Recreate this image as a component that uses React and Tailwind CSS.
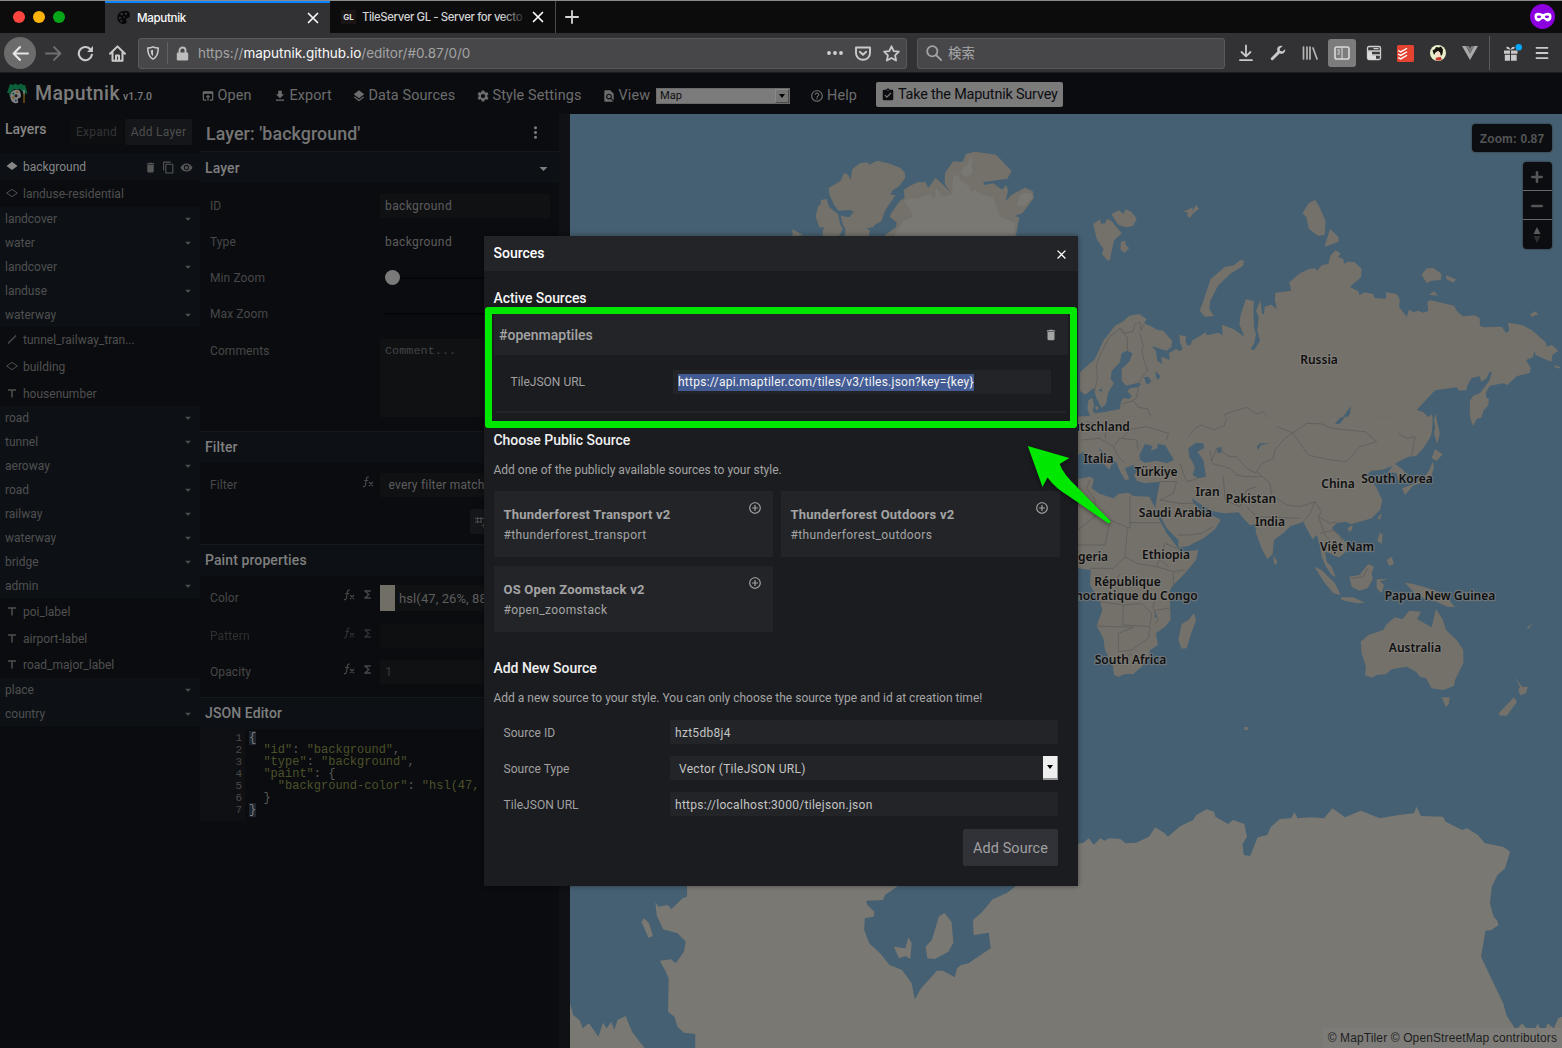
import React from "react";
import {
  MdOpenInBrowser, MdFileDownload, MdLayers, MdSettings, MdFindInPage, MdHelpOutline,
  MdAssignmentTurnedIn, MdDelete, MdContentCopy, MdVisibility, MdArrowDropDown, MdMoreVert,
  MdAddCircleOutline, MdFunctions, MdClose,
} from "react-icons/md";

/* ---------- browser chrome ---------- */

function Cross({ className }) {
  return (
    <svg viewBox="0 0 12 12" className={className} fill="none" stroke="currentColor" strokeWidth="1.7" strokeLinecap="round">
      <path d="M1.5 1.5l9 9M10.5 1.5l-9 9" />
    </svg>
  );
}

function Palette({ className }) {
  return (
    <svg viewBox="0 0 16 16" className={className}>
      <path fill="#08080a" d="M12 1C6 0 1 3 1.500 9c.3 4 4 6.500 8 5.700 2-.5 2.500-2 1.500-3.200-1-1.500 0-2.500 1.500-3 2-.5 2.800-2 2.300-4C14.400 2.500 13.500 1.300 12 1z" />
      <g fill="#38383b">
        <circle cx="6" cy="4.500" r="1.200" /><circle cx="10.500" cy="4" r="1.200" /><circle cx="4.200" cy="8.300" r="1.200" />
        <circle cx="5.600" cy="11.700" r="1.100" /><circle cx="8.500" cy="7.500" r=".9" />
      </g>
    </svg>
  );
}

function TabBar() {
  return (
    <div className="flex h-[33px] border-t border-[#8a8a8a] bg-[#0c0c0c]">
      <div className="flex w-[105px] items-center gap-[8px] pl-[13px]">
        <span className="size-[12px] rounded-full bg-[#ff453f]" />
        <span className="size-[12px] rounded-full bg-[#fcb40a]" />
        <span className="size-[12px] rounded-full bg-[#07a618]" />
      </div>
      <div className="flex w-[225px] items-center border-t-2 border-[#0a84ff] bg-[#323234] pb-[1px] pl-[11px] pr-[11px] text-[11.600px] font-medium tracking-[-0.33px] text-[#f9f9fa]">
        <Palette className="size-[15px]" />
        <span className="ml-[6px] flex-1 pt-[2px]">Maputnik</span>
        <Cross className="size-[12px]" />
      </div>
      <div className="flex w-[225px] items-center pl-[11px] pr-[11px] text-[11.600px] font-medium text-[#d2d2d3]">
        <span className="flex h-[14px] w-[15px] items-center justify-center bg-[#1b1515] text-[8px] font-bold text-[#dddddd]">GL</span>
        <span className="relative ml-[6px] w-[165px] whitespace-nowrap pt-px text-[11.400px] tracking-[-0.400px]">
          TileServer GL - Server for vecto
          <span className="absolute inset-y-0 right-0 w-[26px] bg-gradient-to-r from-transparent to-[#0c0c0c]" />
        </span>
        <Cross className="ml-auto size-[12px] shrink-0 text-white" />
      </div>
      <div className="my-0 w-px bg-[#4a4a4a]" />
      <svg viewBox="0 0 14 14" className="ml-[9px] mt-[9px] size-[14px]" stroke="#d5d5d5" strokeWidth="1.800" strokeLinecap="round"><path d="M7 .9v12.200M.9 7h12.200" /></svg>
      <div className="ml-auto mr-[7px] mt-[3px] flex size-[25px] items-center justify-center rounded-full bg-[#8c00e0]">
        <svg viewBox="0 0 18 10" className="h-[10px] w-[18px]">
          <path fill="#fff" d="M4.300.8C6.500.8 7.500 2 9 2s2.500-1.200 4.700-1.200C16.500.8 17.500 2 17.500 4.500c0 3-1.300 4.900-3.800 4.900C11.300 9.400 10.500 6.800 9 6.800S6.700 9.400 4.300 9.400C1.800 9.400.5 7.500.5 4.500.5 2 1.500.8 4.300.8z" />
          <ellipse cx="5" cy="4.800" rx="2.100" ry="1.400" fill="#8c00e0" /><ellipse cx="13" cy="4.800" rx="2.100" ry="1.400" fill="#8c00e0" />
        </svg>
      </div>
    </div>
  );
}

function NavBar() {
  return (
    <div className="flex h-[40px] items-center border-b border-[#1c1c1e] bg-[#323234] pt-[1px] text-[#c9c9ca]">
      <div className="ml-[4px] flex size-[32px] items-center justify-center rounded-full bg-[#6b6b6c]">
        <svg viewBox="0 0 16 16" className="size-[17px]" fill="none" stroke="#e4e4e4" strokeWidth="2" strokeLinecap="round" strokeLinejoin="round"><path d="M15 8H1.500M7.500 2l-6 6 6 6" /></svg>
      </div>
      <svg viewBox="0 0 16 16" className="ml-[9px] size-[17px]" fill="none" stroke="#6f6f71" strokeWidth="1.900" strokeLinecap="round" strokeLinejoin="round"><path d="M1 8h13.500M8.500 2l6 6-6 6" /></svg>
      <svg viewBox="0 0 16 16" className="ml-[15px] size-[17px]" fill="none" stroke="currentColor" strokeWidth="2" strokeLinecap="round"><path d="M14 9.200A6.200 6.200 0 1 1 12.300 3.700" /><path d="M15 1v5.500H9.500z" fill="currentColor" stroke="none" /></svg>
      <svg viewBox="0 0 16 16" className="ml-[15px] size-[17px]" fill="none" stroke="currentColor" strokeWidth="1.900" strokeLinecap="round" strokeLinejoin="round"><path d="M1 8.200L8 1.300l7 6.900M3.300 7v7.800h9.400V7" /><path d="M6.600 14.500V9.800h2.800v4.700" /></svg>

      <div className="ml-[12px] flex h-[31px] w-[769px] items-center rounded-[3px] border border-[#5a5a5c] bg-[#474749]">
        <svg viewBox="0 0 16 16" className="ml-[7px] size-[14px]" fill="none" stroke="#c9c9ca" strokeWidth="1.800" strokeLinejoin="round"><path d="M8 1c2 1 4 1.300 6 1.300 0 6-1 10.200-6 12.700C3 12.500 2 8.300 2 2.300 4 2.300 6 2 8 1z" /><path d="M8 4.200v7.300c-1.700-1.200-2.500-3.400-2.600-6.500z" fill="#c9c9ca" stroke="none" /></svg>
        <span className="ml-[7px] h-[22px] w-px bg-[#5e6168]" />
        <svg viewBox="0 0 12 15" className="ml-[8px] h-[15px] w-[13px]"><path d="M3 7V4.500a3 3 0 0 1 6 0V7" fill="none" stroke="#bdbdbd" strokeWidth="1.900" /><rect x=".3" y="6.500" width="11.400" height="8" rx="1.300" fill="#bdbdbd" /></svg>
        <span className="ml-[9px] flex-1 pt-px text-[13.500px] tracking-[-0.01px] text-[#a3a3a4]">https://<span className="text-[#f9f9fa]">maputnik.github.io</span>/editor/#0.87/0/0</span>
        <svg viewBox="0 0 16 4" className="h-[4px] w-[16px]" fill="#d0d0d0"><circle cx="2" cy="2" r="1.900" /><circle cx="8" cy="2" r="1.900" /><circle cx="14" cy="2" r="1.900" /></svg>
        <svg viewBox="0 0 16 15" className="ml-[12px] h-[15px] w-[16px]" fill="none" stroke="#c9c9ca" strokeWidth="1.900" strokeLinecap="round" strokeLinejoin="round"><path d="M1 1.500h14V7c0 4-3 6.800-7 6.800S1 11 1 7z" /><path d="M4.800 5.800L8 8.800l3.200-3" /></svg>
        <svg viewBox="0 0 16 16" className="ml-[12px] mr-[6px] size-[17px]" fill="none" stroke="#c9c9ca" strokeWidth="1.700" strokeLinejoin="round"><path d="M8 1.200l2.100 4.500 4.800.6-3.500 3.400.9 4.900L8 12.200l-4.300 2.400.9-4.900L1.100 6.300l4.800-.6z" /></svg>
      </div>

      <div className="ml-[10px] flex h-[31px] w-[308px] items-center rounded-[3px] border border-[#5a5a5c] bg-[#474749]">
        <svg viewBox="0 0 16 16" className="ml-[8px] size-[16px]" fill="none" stroke="#a3a3a4" strokeWidth="1.800" strokeLinecap="round"><circle cx="6.300" cy="6.300" r="5.100" /><path d="M10 10l5.200 5.200" /></svg>
        <span className="ml-[6px] text-[13.400px] text-[#a8a8a9]">検索</span>
      </div>

      <svg viewBox="0 0 16 18" className="ml-[13px] h-[18px] w-[16px]" fill="none" stroke="currentColor" strokeWidth="1.800" strokeLinecap="round" strokeLinejoin="round"><path d="M8 1.500v10.500M3.500 8L8 12.300 12.500 8M2 16.200h12" /></svg>
      <svg viewBox="0 0 16 16" className="ml-[16px] size-[16px]"><path fill="#c9c9ca" d="M15.200 4.200l-3 2.300-2.300-.8-.2-2.300 2.900-2.200C10.500.2 7.900 1.300 7.300 3.500c-.3 1.100-.1 1.900.2 2.700L1 12.900c-.9 1.200.8 2.900 2 2l6.600-6.400c2.800 1.200 5.900-.9 5.600-4.300z" /></svg>
      <svg viewBox="0 0 16 16" className="ml-[16px] size-[16px]" stroke="#b5b5b6" strokeWidth="1.700" strokeLinecap="round"><path d="M1.500 2v12M5 2v12M8 2v12M11 3l4 11" /></svg>
      <div className="ml-[10px] flex size-[28px] items-center justify-center rounded-[3px] bg-[#7c7c7d]">
        <svg viewBox="0 0 16 14" className="h-[14px] w-[16px]" fill="none" stroke="#d9d9d9" strokeWidth="1.600"><rect x="1" y="1" width="14" height="12" rx="1.800" /><path d="M8 1v12M3.300 4h2.700M3.800 6h2.200M3.300 8h2.400" strokeWidth="1" /></svg>
      </div>
      <svg viewBox="0 0 16 16" className="ml-[10px] size-[16px]"><rect x="1.500" y="1.500" width="13" height="13" rx="1.500" fill="#3b3b3d" stroke="#cfcfcf" strokeWidth="1.300" /><path d="M2 6h12M6 10h8M7.500 3.700h5" stroke="#cfcfcf" strokeWidth="1.300" /><path d="M2 6.500h4v8H2zM6 10.500h4v4H6z" fill="#dcdcdc" /></svg>
      <svg viewBox="0 0 16 16" className="ml-[15px] size-[17px]"><rect width="16" height="16" rx="1.500" fill="#e44332" /><path d="M1 5.200l2.500 1.300L9.500 3M1 8.500l2.500 1.300 6-3.500M1 11.800l2.500 1.300 6-3.500" fill="none" stroke="#fff" strokeWidth="1.200" /></svg>
      <svg viewBox="0 0 16 16" className="ml-[16px] size-[16px]"><circle cx="8" cy="8" r="8" fill="#e9edc9" /><path d="M2.500 5.500L5 4l1-2 3 .5L11 1.500l2 3-.5 4.500-1.500 2-1-3L8 6 5.500 7.500 4 10z" fill="#17130f" /><path d="M5.500 8l3-2 1.800 2-.6 3-1.700 1.200-2-1.200z" fill="#f5dccb" /><path d="M6 12.800l4.500-1 1.500 2.500c-1.700 1.400-4.200 1.700-6.500.8z" fill="#c33a2f" /></svg>
      <svg viewBox="0 0 16 14" className="ml-[16px] h-[14px] w-[16px]"><path d="M0 0h4l4 7.500L12 0h4L8 14z" fill="#a9a9aa" /><path d="M4 0h2.800L8 2.200 9.200 0H12L8 7.500z" fill="#77777a" /></svg>
      <span className="ml-[11px] h-[34px] w-px bg-[#5a5a5c]" />
      <svg viewBox="0 0 20 18" className="ml-[13px] h-[18px] w-[20px]"><path fill="#c9c9ca" d="M1 6.500h6v3.300H1zM8 6.500h6.500v3.300H8zM1.800 10.800H7v6H1.800zM8 10.800h5.700v6H8zM3.500 3c1.500-1 3 .5 4 2.500C8.500 3.500 10 2 11.500 3c.8 1-.5 2.500-4 2.700C4 5.500 2.700 4 3.500 3z" /><circle cx="15.800" cy="3.200" r="3.200" fill="#00a8ff" /></svg>
      <svg viewBox="0 0 14 14" className="ml-[12px] h-[14px] w-[14px]" stroke="#c9c9ca" strokeWidth="1.800" strokeLinecap="round"><path d="M1.500 1.800h11M1.500 7h11M1.500 12.200h11" /></svg>
    </div>
  );
}

/* ---------- Maputnik header ---------- */

function Logo() {
  return (
    <svg viewBox="0 0 22 22" className="size-[22px]">
      <path fill="#0b6039" d="M1 10L3 4l1-3 3 1 2.500-1.500L12 2l3-1.500L17 2l2 0 1 3 1.500 6-2.500-1v4l-2-5-3-3H8L5 9l-1.500 5-.5-4z" />
      <path fill="#808080" d="M11 6.500C7 6.500 4 9.500 4.200 13.500c.2 4 2.700 6.800 6 6.800 2 0 2.500-1 1.800-2.500-.8-1.800.3-2.400 1.600-2.800 1.600-.6 1.600-3 .9-5C14 8 13 6.500 11 6.500z" />
      <circle cx="7.400" cy="10.700" r="1.100" fill="#0b6039" /><circle cx="11.200" cy="9" r="1" fill="#7f5a12" /><circle cx="7.200" cy="14.800" r="1.200" fill="#7f5a12" /><circle cx="10" cy="12.700" r="1.500" fill="#15161a" /><circle cx="9.800" cy="17.500" r="1" fill="#17405e" />
      <path d="M18 7v4" stroke="#8a8a8a" strokeWidth="1.300" /><path d="M18 11v9" stroke="#7f5a12" strokeWidth="1.300" />
    </svg>
  );
}

function HeaderItem({ icon: Icon, label, className }) {
  return (
    <div className={"flex items-center gap-[3px] tracking-[0.12px] " + className}>
      <Icon className="mt-[2px] size-[14px] shrink-0" />
      <span>{label}</span>
    </div>
  );
}

function AppHeader() {
  return (
    <div className="flex h-[41px] items-center whitespace-nowrap bg-[#0b0c0f] pl-[6px] text-[14.400px] text-[#6d6d6e]">
      <Logo />
      <div className="ml-[7px] flex w-[165.500px] items-baseline font-bold">
        <span className="text-[19.500px] font-medium tracking-[0.400px] text-[#7c7c7c]">Maputnik</span>
        <span className="ml-[3px] text-[10.500px] font-medium text-[#7c7c7c]">v1.7.0</span>
      </div>
      <HeaderItem icon={MdOpenInBrowser} label="Open" className="mt-[4px] w-[72px]" />
      <HeaderItem icon={MdFileDownload} label="Export" className="mt-[4px] w-[79px]" />
      <HeaderItem icon={MdLayers} label="Data Sources" className="mt-[4px] w-[124px]" />
      <HeaderItem icon={MdSettings} label="Style Settings" className="mt-[4px] w-[126px]" />
      <HeaderItem icon={MdFindInPage} label="View" className="mt-[4px] w-[54.500px]" />
      <div className="mt-[4px] flex h-[16px] w-[134px] items-center justify-between border border-[#6a6a6a] bg-[#7b7b7b] pl-[3px] text-[11.200px] text-[#101010]">
        <span className="pt-px">Map</span>
        <span className="flex h-full w-[14px] items-center justify-center border border-b-[#4a4a4a] border-l-[#8a8a8a] border-r-[#4a4a4a] border-t-[#8a8a8a] bg-[#757575]">
          <span className="size-0 border-x-[3px] border-t-[4px] border-x-transparent border-t-black" />
        </span>
      </div>
      <HeaderItem icon={MdHelpOutline} label="Help" className="ml-[20px] mt-[4px] w-[66px]" />
      <div className="mt-[2px] flex h-[25px] w-[187px] items-center gap-[3px] rounded-[2px] bg-[#7b7b7b] pl-[5px] pt-px tracking-[-0.18px] text-[#0c0d10]">
        <MdAssignmentTurnedIn className="size-[14px] shrink-0" />
        Take the Maputnik Survey
      </div>
    </div>
  );
}

/* ---------- layer list ---------- */

const LAYERS = [
  ["fill-solid", "background"], ["fill", "landuse-residential"],
  ["group", "landcover"], ["group", "water"], ["group", "landcover"], ["group", "landuse"], ["group", "waterway"],
  ["line", "tunnel_railway_tran..."], ["fill", "building"], ["text", "housenumber"],
  ["group", "road"], ["group", "tunnel"], ["group", "aeroway"], ["group", "road"], ["group", "railway"], ["group", "waterway"], ["group", "bridge"], ["group", "admin"],
  ["text", "poi_label"], ["text", "airport-label"], ["text", "road_major_label"],
  ["group", "place"], ["group", "country"],
];

function LayerGlyph({ kind }) {
  return (
    <svg viewBox="0 0 12 12" className="mr-[5px] size-[12px] shrink-0" fill="none" stroke="currentColor">
      {kind === "fill" && <path d="M.7 5L6 1.300 11.300 5 6 8.700z" />}
      {kind === "fill-solid" && <path d="M.5 4.900L6 .8l5.500 4.100L6 9z" fill="#868686" stroke="none" />}
      {kind === "line" && <path d="M2 9.500l8-8" strokeWidth="1.200" />}
      {kind === "text" && <path d="M2 2h8M6 2v7.500" strokeWidth="1.500" />}
    </svg>
  );
}

function LayerList() {
  return (
    <div className="h-full w-[200px] bg-[#0b0c0f] text-[12px] text-[#4f5050]">
      <div className="flex h-[39.400px] pl-[5px]">
        <span className="mt-[5px] w-[65px] text-[14px] font-medium text-[#868686]">Layers</span>
        <div className="mt-[5px] flex h-[26px] w-[53px] items-center justify-center rounded-[2px] bg-[#0d0e10] text-[12px] tracking-[0.250px] text-[#333435]">Expand</div>
        <div className="ml-[2px] mt-[5px] flex h-[26px] w-[67px] items-center justify-center rounded-[2px] bg-[#151619] text-[12px] tracking-[0.250px] text-[#4d4e4e]">Add Layer</div>
      </div>
      {LAYERS.map(([kind, name], i) =>
        kind === "group" ? (
          <div key={i} className="flex h-[24px] items-center justify-between bg-[#0d1015] pl-[5px] pr-[5px]">
            {name}
            <MdArrowDropDown className="size-[14px]" />
          </div>
        ) : (
          <div key={i} className={"flex h-[26.600px] items-center pl-[6px] pt-px " + (kind === "fill-solid" ? "bg-[#0d1015] text-[#868686]" : "")}>
            <LayerGlyph kind={kind} />
            <span className="flex-1">{name}</span>
            {kind === "fill-solid" && (
              <span className="mr-[7px] flex items-center gap-[5px] text-[#555656]">
                <MdDelete className="size-[13px]" /><MdContentCopy className="size-[13px]" /><MdVisibility className="size-[13px]" />
              </span>
            )}
          </div>
        )
      )}
    </div>
  );
}

/* ---------- property drawer ---------- */

function Section({ title, arrow, className, children }) {
  return (
    <div className={"border-t border-[#17181b] " + className}>
      <div className={"flex h-[31px] items-center justify-between bg-[#0d1015] pl-[5px] pr-[6px] text-[14px] font-medium text-[#7f7f7f] " + (arrow ? "pt-px" : "")}>
        {title}
        {arrow && <MdArrowDropDown className="size-[19px]" />}
      </div>
      {children}
    </div>
  );
}

function Fn() {
  return (
    <svg viewBox="0 0 12 12" className="size-[12px]" fill="none" stroke="currentColor" strokeWidth="1.200">
      <path d="M6.800 1.200C5.300.6 4.700 1.500 4.500 2.800L3.400 9c-.3 1.500-1.200 2-2.500 1.500M2.200 4.500h4M7 6l4 4M11 6l-4 4" />
    </svg>
  );
}

function Row({ label, className, tools, children }) {
  return (
    <div className={"flex pl-[10px] " + className}>
      <span className="w-[100px]">{label}</span>
      <span className="mr-[6px] flex flex-1 items-center justify-end gap-[6px] pb-[6px]">
        {tools && <Fn />}
        {tools === "two" && <MdFunctions className="size-[13px]" />}
      </span>
      <div className="flex w-[179px] justify-start">{children}</div>
    </div>
  );
}

const JSON_LINES = [
  [["b", "{"]],
  [["p", "  "], ["s", '"id"'], ["p", ": "], ["s", '"background"'], ["p", ","]],
  [["p", "  "], ["s", '"type"'], ["p", ": "], ["s", '"background"'], ["p", ","]],
  [["p", "  "], ["s", '"paint"'], ["p", ": {"]],
  [["p", "    "], ["s", '"background-color"'], ["p", ": "], ["s", '"hsl(47,']],
  [["p", "  }"]],
  [["b", "}"]],
];
const TOKEN = { b: "bg-[#1f252e] text-[#7a7a7a]", p: "text-[#5a5a5a]", s: "text-[#4b522b]" };

function Drawer() {
  const field = "h-[24px] w-[170px] flex items-center bg-[#101113] pl-[5px] text-[12px] tracking-[0.400px] text-[#5d5d5e]";
  return (
    <div className="flex h-full w-[370px] bg-[#0b0c0f] text-[12px] tracking-[0.1px] text-[#474849]">
      <div className="w-[359px]">
        <div className="flex h-[37px] items-center justify-between pl-[6px] pr-[14px] text-[17.800px] font-medium text-[#757576]">
          <span className="mt-[3px]">Layer: 'background'</span>
          <MdMoreVert className="size-[19px] text-[#7a7a7a]" />
        </div>
        <Section title="Layer" arrow className="h-[280px]">
          <div className="pt-[4.500px]">
            <Row label="ID" className="h-[36.200px] items-center"><div className={field}>background</div></Row>
            <Row label="Type" className="h-[36.200px] items-center"><div className="pl-[5px] tracking-[0.400px] text-[#5d5d5e]">background</div></Row>
            <Row label="Min Zoom" className="h-[36.200px] items-center">
              <div className="flex w-full items-center pl-[5px]"><span className="size-[15px] rounded-full bg-[#7a7a7a]" /><span className="h-[2px] flex-1 bg-[#050607]" /></div>
            </Row>
            <Row label="Max Zoom" className="h-[36.200px] items-center"><div className="ml-[3px] h-[2px] w-full bg-[#050607]" /></Row>
            <Row label="Comments" className="h-[80px] pt-[10px]">
              <div className="-mt-[3px] h-[78px] w-[170px] bg-[#101113] pl-[5px] pt-[4px] font-['Courier_New','Liberation_Mono',monospace] text-[11.700px] text-[#444546]">Comment...</div>
            </Row>
          </div>
        </Section>
        <Section title="Filter" className="h-[113px]">
          <Row label="Filter" className="h-[42px] items-center pt-px" tools="one"><div className="flex h-[24px] w-[170px] items-center bg-[#101113] pl-[8.500px] tracking-[0.2px] text-[#5d5d5e]">every filter matches</div></Row>
          <div className="ml-[270px] mt-[4px] flex h-[25px] w-[60px] items-center rounded-[2px] bg-[#151619] pl-[5px] text-[#4a4a4a]">
            <svg viewBox="0 0 12 12" className="size-[12px]" stroke="currentColor" strokeWidth="1.200"><path d="M0 2.500h12M0 6h7M2.500 1v6M6 1v6M9.500 1v4M9 7v5M6.500 9.500h5" /></svg>
          </div>
        </Section>
        <Section title="Paint properties" className="h-[153px]">
          <Row label="Color" className="h-[43.500px] items-center" tools="two">
            <div className="flex h-[26px] w-[170px] items-center bg-[#101113] text-[13px] text-[#5d5d5e]"><span className="h-full w-[15px] bg-[#716e66]" /><span className="ml-[4px] whitespace-nowrap pt-px">hsl(47, 26%, 88%)</span></div>
          </Row>
          <Row label="Pattern" className="-mt-[1.500px] h-[36px] items-center opacity-60" tools="two"><div className={field} /></Row>
          <Row label="Opacity" className="h-[36px] items-center" tools="two"><div className={field}><span className="text-[13px] text-[#373839]">1</span></div></Row>
        </Section>
        <Section title="JSON Editor" className="">
          <div className="flex h-[92px] font-['Courier_New','Liberation_Mono',monospace] text-[12px] leading-[12px] tracking-normal">
            <div className="w-[45px] bg-[#0f1013] pr-[3px] pt-[3px] text-right font-['Liberation_Mono'] text-[11px] leading-[12px] text-[#4a4a4a]">
              {JSON_LINES.map((_, i) => <div key={i}>{i + 1}</div>)}
            </div>
            <div className="pl-[4px] pt-[3px]">
              {JSON_LINES.map((line, i) => (
                <div key={i} className="h-[12px] whitespace-pre">
                  {line.map(([k, t], j) => <span key={j} className={TOKEN[k]}>{t}</span>)}
                </div>
              ))}
            </div>
          </div>
        </Section>
      </div>
      <div className="w-[11px] bg-[#101114]" />
    </div>
  );
}

/* ---------- map ---------- */

const LABELS = [
  ["Russia", 1319, 359], ["utschland", 1101, 426.500], ["Italia", 1098.500, 458.500], ["Türkiye", 1156, 471], ["Iran", 1207.500, 491.500],
  ["Pakistan", 1251, 498.500], ["China", 1338, 483.500], ["South Korea", 1397, 478.500], ["Saudi Arabia", 1175.500, 512.500], ["India", 1270, 521.500],
  ["Ethiopia", 1166, 554.500], ["geria", 1093, 556], ["Việt Nam", 1347, 546.500], ["République", 1127.500, 581.500], ["Démocratique du Congo", 1126.500, 595.500],
  ["Papua New Guinea", 1440, 595.500], ["South Africa", 1130.500, 659], ["Australia", 1415, 647.500],
];

function WorldMap() {
  return (
    <svg viewBox="570 114 992 934" className="block h-[934px] w-[992px]">
      <rect x="570" y="114" width="992" height="934" fill="#456072" />
      {/* Greenland and the Canadian arctic */}
      <g transform="translate(570 114) scale(.33333)" fill="#74716a">
        <path d="M776 222L812 200 822 177 833 181 842 197 847 165 870 148 892 145 898 152 922 140 955 148 992 162 1005 177 1005 193 987 217 968 229 961 242 977 243 946 288 934 322 917 331 909 340 890 343 900 350 893 375 825 375 826 345 818 330 812 305 837 310 852 293 838 288 806 290 792 272 778 240z" />
        <path d="M752 258L770 255 778 280 804 300 810 330 819 345 805 370 758 375 758 350 763 341 748 340 737 308 745 275 753 270z" />
        <path d="M667 346L700 363 668 370z" />
        <path d="M945 363L978 340 980 325 960 310 962 300 990 260 1004 252 1001 228 1020 215 1045 204 1067 205 1075 222 1097 191 1142 235 1124 210 1125 177 1150 142 1178 144 1188 120 1214 113 1278 122 1325 171 1312 194 1240 204 1242 213 1270 208 1296 227 1309 213 1314 230 1307 261 1325 242 1365 221 1389 232 1391 252 1357 298 1333 306 1348 310 1337 370 945 375z" />
        <path fill="#7a7873" d="M970 366L1000 322 1027 308 1026 297 1001 258 1050 252 1078 241 1095 254 1098 222 1115 248 1145 242 1150 190 1165 180 1170 197 1197 217 1204 235 1215 228 1235 242 1268 250 1290 307 1337 328 1332 370zM1182 160L1195 150 1198 130 1207 135 1205 155 1209 177 1187 190 1170 176zM1341 270L1350 245 1365 236 1386 240 1388 252 1366 274 1345 276z" />
      </g>

      <g transform="translate(1070 114) scale(.33333)" fill="#74716a">
        {/* arctic islands */}
        <path d="M70 330L90 316 93 330 105 328 112 314 124 320 155 358 133 378 126 405 120 438 113 440 96 420 101 406 80 375zM124 300L147 289 160 300 167 286 185 294 200 314 190 335 168 340 145 333 135 318zM153 383L166 380 167 393 178 402 163 417 151 405zM340 293L368 280 367 292 378 273 387 284 368 300 360 312 353 307 352 295z" />
        <path d="M698 298L716 268 735 257 748 278 767 322 764 362 745 366 717 345 709 310zM780 345L805 368 806 383 763 399zM389 590L397 570 408 538 422 495 465 458 492 454 512 437 522 441 519 456 480 480 444 515 421 560 418 585 432 607 405 608z" />
        <path d="M1055 482L1070 463 1090 462 1115 480 1112 498 1085 500 1070 507zM1127 484L1158 496 1150 506 1130 496zM1077 542L1092 531 1104 545zM1380 602L1394 592 1406 600 1385 608zM1453 754L1472 760 1472 764 1455 760z" />
        {/* northern Eurasia */}
        <path d="M30 775L75 735 100 680 135 635 160 622 178 605 208 600 230 615 222 628 238 634 262 648 280 650 306 680 305 698 290 710 270 704 246 696 258 712 262 740 276 750 274 728 300 738 296 718 318 705 330 712 338 704 330 685 328 662 349 668 346 680 352 695 362 692 366 680 408 655 410 664 446 656 458 665 456 632 490 645 523 668 508 630 512 602 528 555 552 562 550 590 552 640 558 660 554 685 542 706 552 708 570 680 562 650 566 610 558 590 572 558 576 600 582 600 584 578 604 572 621 585 615 560 616 536 664 530 658 505 690 478 715 466 735 462 740 470 757 453 775 450 781 425 797 409 812 419 804 428 820 435 822 450 832 443 854 444 875 465 873 490 840 519 865 532 868 543 885 535 910 540 914 552 948 554 948 535 980 540 989 555 988 580 1010 608 1018 586 1030 595 1045 590 1060 596 1075 590 1072 565 1080 558 1152 575 1160 590 1178 607 1214 604 1229 612 1230 635 1240 640 1295 638 1308 656 1318 650 1314 626 1357 633 1385 648 1427 685 1430 698 1445 692 1465 710 1448 722 1444 743 1418 733 1396 722 1394 710 1388 730 1368 738 1382 762 1380 776 1340 787 1312 813 1300 808 1260 815 1248 835 1248 850 1257 855 1254 875 1240 890 1235 910 1220 915 1210 935 1204 925 1199 900 1200 860 1210 845 1230 837 1258 800 1266 774 1258 775 1250 793 1234 803 1228 786 1205 792 1190 818 1190 828 1168 830 1160 820 1095 829 1040 888 1060 895 1075 910 1086 900 1088 930 1084 962 24 962 24 908 60 905 52 885 55 858 68 852 72 875 68 890 75 898 100 895 150 885 152 865 160 852 178 855 185 845 172 832 180 822 205 820 213 810 205 806 168 815 155 800 155 765 180 740 187 718 172 710 155 718 150 745 125 770 122 795 132 808 115 835 108 870 95 882 78 850 72 822 45 842 30 830z" />
        <path d="M1096 897L1103 930 1110 962 1100 962 1092 920zM75 880L84 875 85 886 78 888z" />
        <path fill="#456072" d="M795 930L822 905 842 876 840 900 822 922 803 932zM222 790L235 788 244 803 230 812zM256 770L270 785 266 798 258 790zM84 830L97 822 95 833z" />
        <path d="M75 830L82 790 80 750 92 720 118 668 130 660 150 643 172 672 172 710M150 643L165 658 190 652 195 630 210 625 213 650 222 630M210 660L220 695 216 710 222 740 233 768 205 806M205 822L200 850 190 860 155 870M190 860L205 880 235 885 242 910 230 930 180 930M355 960L360 940 390 928 430 940 465 925 465 900 530 880 560 900 580 893 615 940 640 938 665 958 715 940 750 948 757 925 790 940 830 950 900 950 925 910 960 910 985 957" fill="none" stroke="#5f5e5b" strokeWidth="2.500" />
      </g>

      <g transform="translate(1070 420) scale(.33333)" fill="#74716a">
        {/* southern Eurasia */}
        <path d="M24 -10L1088 -10 1082 50 1060 85 1038 108 1015 110 985 125 975 132 1000 150 1010 168 1002 185 985 180 980 160 955 155 968 138 935 150 905 152 888 165 905 178 920 205 937 240 930 270 905 295 870 305 845 312 825 305 800 310 785 325 808 345 830 370 828 395 808 412 795 408 778 398 765 395 770 425 785 440 797 470 785 465 768 440 755 410 750 375 740 345 728 358 715 335 700 305 690 310 662 318 640 340 612 360 608 402 592 418 575 385 558 340 556 312 540 316 525 300 505 277 465 280 435 275 405 262 365 235 370 248 390 268 415 290 432 288 452 300 435 328 400 355 355 378 325 383 325 360 290 325 272 290 256 262 262 225 270 185 225 190 200 182 192 165 205 150 190 135 165 145 178 178 165 180 148 150 140 128 108 105 85 82 100 110 128 125 118 150 100 130 60 110 40 95 24 105z" />
        {/* Africa */}
        <path d="M24 177L60 170 72 178 65 205 90 222 130 235 145 222 175 218 190 228 238 230 248 250 258 265 256 275 272 305 290 340 310 365 322 382 330 396 385 390 378 420 345 460 305 500 295 525 300 545 302 600 285 620 258 640 264 675 240 690 238 705 215 740 190 762 165 762 145 770 132 765 128 735 105 690 100 655 80 618 97 570 90 545 60 495 62 450 24 445zM325 660L335 612 355 600 372 580 378 600 362 645 350 685 335 686z" />
        {/* islands */}
        <path d="M610 405L622 425 618 434 612 430zM733 440L755 450 795 490 812 525 790 520 765 490zM812 532L850 532 885 548 860 550 815 540zM838 470L868 465 895 432 912 440 905 460 908 478 893 505 868 512 845 500zM920 478L955 476 930 484 942 495 935 520 920 505zM922 295L935 280 930 300zM930 337L938 345 935 372 922 362zM950 420L965 410 972 432 958 438zM1005 488L1030 492 1060 500 1105 515 1130 530 1155 562 1130 560 1100 545 1060 535 1030 515zM832 325L848 315 846 330 838 336z" />
        <path d="M1095 88L1118 103 1100 122 1085 115zM1088 125L1092 140 1085 165 1060 185 1028 198 1005 225 996 205 1030 192 1065 170 1078 150zM1100 0L1108 45 1102 72 1092 40z" />
        <path d="M872 665L895 645 940 630 950 612 975 592 997 598 1018 572 1052 575 1042 598 1085 622 1098 568 1118 598 1128 630 1160 660 1180 690 1180 730 1155 780 1152 797 1120 810 1085 805 1068 775 1050 770 1038 755 1010 740 965 748 948 763 920 765 905 773 885 765 888 740 875 700zM1115 832L1139 832 1137 850 1128 862zM1335 772L1356 800 1374 800 1368 820 1350 826 1345 810 1350 800zM1332 832L1341 845 1310 888 1285 885 1290 875zM523 920L535 922 534 930 523 930zM1272 648L1285 662zM1370 622L1388 612 1375 626z" />
        {/* inland seas */}
        <path fill="#456072" d="M208 105L225 72 248 78 242 92 262 85 262 72 285 75 300 100 312 120 290 130 262 122 225 128 210 120zM355 85L378 68 400 70 402 85 382 95 400 120 408 170 385 175 368 165 375 140 358 110zM440 85L455 80 455 98 443 98zM560 80L570 70 602 70 572 75 565 90zM255 565L260 595 254 590zM795 12L812 -8 825 -8 808 12z" />
        <path fill="none" stroke="#5f5e5b" strokeWidth="2.500" d="M355 50L375 25 395 15 430 30 462 18 470 -5M620 20L668 38 710 10 757 12 785 25 830 30 885 35 920 65 870 80 830 125 770 118 715 105 690 70 668 38M668 38L640 60 615 90 610 115 575 130 560 155 600 190 605 225 650 255 690 260 735 245 755 275 745 290 780 310 800 305M985 40L1010 55 1035 50 1025 110M420 90L425 125 440 85 480 110 500 110 530 145 560 160M425 130L480 145 500 165 525 170 575 170M460 170L465 240 510 260 530 210 560 200M330 130L340 160 350 185 385 175M270 185L320 185 310 220 270 240 330 250 375 250M325 345L360 345 395 340 430 320M180 228L180 325 120 300 80 285 24 330M180 308L275 308M60 180L50 205 75 240 75 290M120 300L105 375 60 375 24 375M172 325L165 410 200 430 260 440 285 370 320 385M165 410L130 445 60 445M260 440L310 455 345 450M90 545L160 555 158 615 240 620 245 580 215 550 160 555M150 460L130 495M80 618L190 622 145 640 145 695 185 690 235 655 240 620M255 610L265 600 248 560 260 530M310 455L310 500M260 570L298 565M140 735L185 700M750 340L790 330 810 350 825 385M745 290L765 345 790 370M700 305L720 280 735 245M530 260L560 290 690 295M1085 500L1085 545M845 475L880 470 893 445M250 400L295 440M35 60L90 55 130 80 150 55 200 60 205 90M50 5L80 15 120 10 170 30 230 20 295 40 290 60M130 80L145 110 165 130M110 20L105 55M180 30L155 55" />
      </g>

      {/* Antarctica */}
      <g transform="translate(570 740) scale(.63266 .33333)" fill="#7a7873">
        <path d="M185 420L185 470 178 475 160 508 155 495 140 500 135 487 137 525 147 568 170 580 183 605 180 635 167 670 160 658 142 662 150 690 156 715 155 815 165 830 170 860 180 878 198 882 198 924 1568 924 1568 830 1562 835 1555 865 1545 850 1538 890 1530 850 1520 885 1505 850 1495 870 1480 825 1475 790 1455 710 1440 650 1447 572 1456 570 1468 555 1465 540 1460 530 1454 490 1457 440 1466 405 1478 385 1486 335 1475 320 1446 310 1435 285 1418 265 1410 270 1384 245 1380 230 1345 228 1338 200 1334 220 1310 225 1280 235 1250 212 1225 232 1205 205 1192 235 1170 232 1150 235 1145 217 1140 235 1122 237 1108 260 1102 285 1087 292 1075 348 1065 345 1063 312 1070 290 1066 252 1048 240 1040 252 1020 230 1018 215 1006 208 990 225 985 240 965 258 945 290 940 280 925 262 915 290 895 308 878 310 870 297 852 295 845 302 838 295 828 315 820 295 812 308 804 310 790 420z" />
        <path d="M0 790L5 825 15 840 20 865 30 850 45 890 52 848 58 865 65 845 70 870 75 840 88 828 98 875 108 900 118 924 0 924zM113 545L117 535 125 550 131 588 124 593z" />
        <path fill="#456072" d="M530 420L518 438 498 465 495 480 468 482 470 495 481 515 480 530 466 535 465 570 473 610 490 640 505 675 525 690 540 730 545 778 555 745 580 692 590 692 608 712 612 685 618 675 630 670 645 650 665 625 662 578 638 585 637 540 652 515 668 478 690 460 705 438 715 420z" />
        <path d="M583 530L592 519 603 545 606 608 598 635 577 657 565 655 562 620 572 600zM512 620L530 625 535 592 540 610 538 657 530 648 520 655z" />
      </g>
      <g className="font-['Noto_Sans',sans-serif]" fontSize="12" fontWeight="600" textAnchor="middle" fill="#0f0f10" stroke="#85837e" strokeOpacity=".6" strokeWidth="2.400" paintOrder="stroke" strokeLinejoin="round">
        {LABELS.map(([t, x, y]) => <text key={t} x={x} y={y + 4.900}>{t}</text>)}
      </g>
    </svg>
  );
}

function MapControls() {
  return (
    <div className="absolute right-[10px] top-[10px] flex flex-col items-end">
      <div className="flex h-[28px] w-[80px] items-center justify-center rounded-[4px] bg-[#0c0d10] pt-px font-['Liberation_Sans'] text-[12px] font-bold tracking-[0.1px] text-[#545556] shadow-[0_0_2px_#222]">Zoom: 0.87</div>
      <div className="mt-[10px] w-[29px] divide-y divide-[#68696a] rounded-[4px] bg-[#0c0d10] text-[#545556] shadow-[0_0_2px_#222]">
        <div className="flex h-[29px] items-center justify-center pr-px pt-px"><svg viewBox="0 0 12 12" className="size-[12px]" stroke="currentColor" strokeWidth="2.600" strokeLinecap="round"><path d="M6 1.300v9.400M1.300 6h9.400" /></svg></div>
        <div className="flex h-[29px] items-center justify-center pr-px pt-px"><svg viewBox="0 0 12 12" className="size-[12px]" stroke="currentColor" strokeWidth="2.600" strokeLinecap="round"><path d="M1.300 6h9.400" /></svg></div>
        <div className="flex h-[29px] items-center justify-center pr-px"><svg viewBox="0 0 8 16" className="h-[16px] w-[8px]"><path d="M4 0l3.500 7h-7z" fill="#5a5a5b" /><path d="M4 16l3.500-7h-7z" fill="#2d2e30" /></svg></div>
      </div>
    </div>
  );
}

/* ---------- sources modal ---------- */

function SourceCard({ title, id }) {
  return (
    <div className="flex h-[66px] justify-between bg-[#232428] pl-[10px] pr-[10.500px] pt-[12px] text-[#a4a4a4]">
      <div className="pt-[0.500px]">
        <div className="text-[13px] font-bold leading-[21px] tracking-[0.220px]">{title}</div>
        <div className="text-[12px] leading-[20px] tracking-[0.360px]">{id}</div>
      </div>
      <MdAddCircleOutline className="-mt-[2px] size-[14px]" />
    </div>
  );
}

function FormRow({ label, children }) {
  return (
    <div className="flex h-[24px] items-center">
      <span className="w-[166.500px] pt-px text-[12px] tracking-[0.050px] text-[#a0a0a0]">{label}</span>
      <div className="flex h-full flex-1 items-center justify-between bg-[#232428] pl-[5px] pt-px text-[12px] tracking-[0.290px] text-[#c4c4c4]">{children}</div>
    </div>
  );
}

function SourcesModal() {
  return (
    <div className="absolute left-[484px] top-[236px] h-[650px] w-[594px] bg-[#1b1c20] text-[#a4a4a4] shadow-[0_0_5px_rgba(0,0,0,0.4)]">
      <div className="flex h-[35px] items-center justify-between bg-[#232428] pl-[9.500px] pr-[9px] text-[14px] font-medium text-white">
        Sources
        <MdClose className="mt-[1px] size-[15px]" />
      </div>
      <div className="h-[43px] pl-[9.500px] pt-[17px] text-[14px] font-medium leading-[20px] tracking-[-0.05px] text-[#f4f4f4]">Active Sources</div>
      <div className="ml-[10px] mr-[10px]">
        <div className="flex h-[41px] items-center justify-between bg-[#232428] pl-[5px] pr-[10px] pt-px text-[14px] font-medium">
          #openmaptiles
          <MdDelete className="size-[14px]" />
        </div>
        <div className="mx-[2px] flex h-[58px] border-b-2 border-[#232428] pl-[14.500px] pt-[15px] text-[12px]">
          <span className="w-[162.500px] pt-[3px] leading-[18px] tracking-[0px] text-[#a0a0a0]">TileJSON URL</span>
          <div className="flex h-[24px] w-[378px] items-center bg-[#232428] pl-[5px] pt-px"><span className="whitespace-nowrap bg-[#435b93] leading-[17px] tracking-[0.250px] text-[#f4f4f4]">https://api.maptiler.com/tiles/v3/tiles.json?key={"{key}"}</span></div>
        </div>
      </div>
      <div className="mt-[17px] pl-[9.500px] text-[14px] font-medium leading-[20px] tracking-[-0.03px] text-[#f0f0f0]">Choose Public Source</div>
      <div className="mt-[11px] pl-[9.500px] text-[12px] leading-[18px]">Add one of the publicly available sources to your style.</div>
      <div className="mt-[12px] grid grid-cols-[279px_279px] gap-x-[8px] gap-y-[9px] pl-[9.500px]">
        <SourceCard title="Thunderforest Transport v2" id="#thunderforest_transport" />
        <SourceCard title="Thunderforest Outdoors v2" id="#thunderforest_outdoors" />
        <SourceCard title="OS Open Zoomstack v2" id="#open_zoomstack" />
      </div>
      <div className="mt-[25.500px] pl-[9.500px] text-[14px] font-medium leading-[20px] tracking-[-0.03px] text-[#f0f0f0]">Add New Source</div>
      <div className="mt-[11.500px] pl-[9.500px] text-[12px] leading-[18px]">Add a new source to your style. You can only choose the source type and id at creation time!</div>
      <div className="ml-[19.500px] mr-[20px] mt-[13px] flex flex-col gap-[12px]">
        <FormRow label="Source ID">hzt5db8j4</FormRow>
        <FormRow label="Source Type">
          <span className="pl-[4px]">Vector (TileJSON URL)</span>
          <span className="-mt-px flex h-[24px] w-[15px] items-center justify-center border-b-2 border-r border-[#9a9a9a] bg-[#efefef]"><span className="size-0 border-x-[3px] border-t-[4px] border-x-transparent border-t-black" /></span>
        </FormRow>
        <FormRow label="TileJSON URL">https://localhost:3000/tilejson.json</FormRow>
      </div>
      <div className="ml-[479px] mt-[13px] flex h-[37px] w-[95px] items-center justify-center rounded-[2px] bg-[#313238] pt-[2px] text-[14.400px] tracking-[0.1px] text-[#a0a0a0]">Add Source</div>
    </div>
  );
}

export default function App() {
  return (
    <div className="relative h-[1048px] w-[1562px] overflow-hidden bg-[#0b0c0f] font-['Roboto',sans-serif]">
      <div className="font-['Inter','Noto_Sans_CJK_JP',sans-serif]">
        <TabBar />
        <NavBar />
      </div>
      <AppHeader />
      <div className="flex h-[934px]">
        <LayerList />
        <Drawer />
        <div className="relative h-[934px] w-[992px]">
          <WorldMap />
          <MapControls />
          <div className="absolute bottom-0 right-0 flex h-[20px] w-[239px] items-center justify-end whitespace-nowrap bg-[#7d7c79] pr-[5px] font-['Liberation_Sans'] text-[12px] tracking-[0.120px] text-[#1e1f20]">© MapTiler © OpenStreetMap contributors</div>
        </div>
      </div>
      <SourcesModal />
      <div className="absolute left-[485px] top-[307px] h-[121px] w-[592px] rounded-[3px] border-[7px] border-[#00e800]" />
      <svg viewBox="1020 440 100 90" className="absolute left-[1020px] top-[440px] h-[90px] w-[100px] drop-shadow-[0_1px_2px_rgba(0,0,0,0.5)]">
        <path fill="#00e800" d="M1027.800 446L1069.400 458 1059.700 464Q1063 474 1078 488L1110.500 521Q1110.500 524.500 1107 522.500L1070 497Q1055 488 1047.500 477.500L1042.500 487z" />
      </svg>
    </div>
  );
}
